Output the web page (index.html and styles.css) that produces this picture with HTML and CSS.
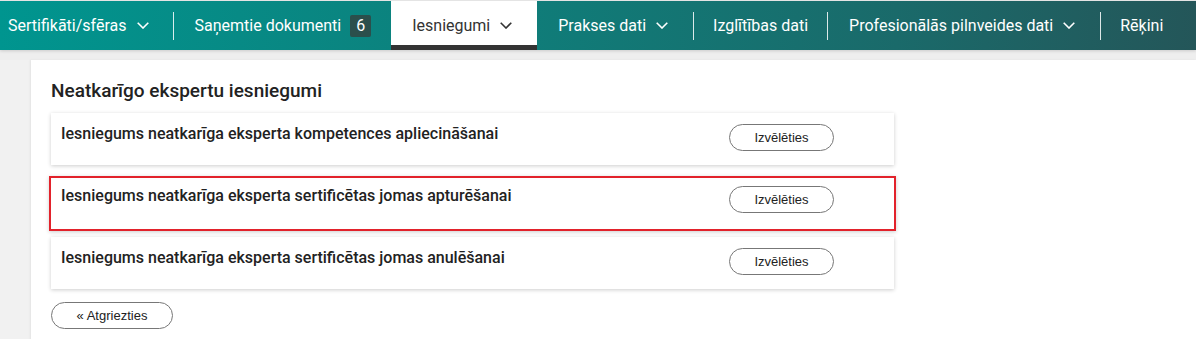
FILE: index.html
```html
<!DOCTYPE html>
<html lang="lv">
<head>
<meta charset="utf-8">
<title>Neatkarīgo ekspertu iesniegumi</title>
<link rel="stylesheet" href="styles.css">
</head>
<body>
<nav class="topnav">
  <a class="nav-item first">Sertifikāti/sfēras <svg class="chev" viewBox="0 0 12 7"><path d="M0.7 0.7 L6 6 L11.3 0.7"/></svg></a>
  <span class="sep"></span>
  <a class="nav-item docs">Saņemtie dokumenti <span class="badge">6</span></a>
  <a class="nav-item active">Iesniegumi <svg class="chev" viewBox="0 0 12 7"><path d="M0.7 0.7 L6 6 L11.3 0.7"/></svg></a>
  <a class="nav-item">Prakses dati <svg class="chev" viewBox="0 0 12 7"><path d="M0.7 0.7 L6 6 L11.3 0.7"/></svg></a>
  <span class="sep"></span>
  <a class="nav-item plain">Izglītības dati</a>
  <span class="sep"></span>
  <a class="nav-item">Profesionālās pilnveides dati <svg class="chev" viewBox="0 0 12 7"><path d="M0.7 0.7 L6 6 L11.3 0.7"/></svg></a>
  <span class="sep"></span>
  <a class="nav-item plain">Rēķini</a>
</nav>
<div class="band"></div>
<main class="panel">
  <h1 class="title">Neatkarīgo ekspertu iesniegumi</h1>
  <div class="list">
    <div class="row r1">
      <div class="row-title">Iesniegums neatkarīga eksperta kompetences apliecināšanai</div>
      <button class="btn pick">Izvēlēties</button>
    </div>
    <div class="row r2 selected">
      <div class="row-title">Iesniegums neatkarīga eksperta sertificētas jomas apturēšanai</div>
      <button class="btn pick">Izvēlēties</button>
    </div>
    <div class="row r3">
      <div class="row-title">Iesniegums neatkarīga eksperta sertificētas jomas anulēšanai</div>
      <button class="btn pick">Izvēlēties</button>
    </div>
  </div>
  <button class="btn back">« Atgriezties</button>
</main>
</body>
</html>
```
FILE: styles.css
```css
html, body {
  margin: 0;
  padding: 0;
}
body {
  background: #f1f1f1;
  font-family: Roboto, "Liberation Sans", Arial, sans-serif;
  color: #222;
  height: 339px;
  overflow: hidden;
}
.topnav {
  display: flex;
  align-items: center;
  height: 49px;
  border-top: 1px solid #e4e4e4;
  background: linear-gradient(90deg, #00958f 0%, #0e7f7b 40%, #1a6a6a 75%, #245659 100%);
  position: relative;
  z-index: 2;
  box-shadow: 0 1px 3px rgba(0,0,0,0.15);
}
.nav-item {
  display: flex;
  align-items: center;
  height: 49px;
  box-sizing: border-box;
  padding: 0 21px;
  color: #fff;
  font-size: 16px;
  white-space: nowrap;
}
.nav-item.first {
  padding-left: 8px;
  padding-right: 20px;
}
.nav-item.docs {
  padding-right: 20px;
}
.nav-item.plain {
  padding: 0 19px;
}
.nav-item .chev {
  width: 12px;
  height: 7px;
  margin-left: 10px;
  margin-right: 4px;
  fill: none;
  stroke: currentColor;
  stroke-width: 1.6;
}
.nav-item.active {
  background: #fff;
  color: #333;
  border-bottom: 5px solid #333;
  padding-top: 5px;
}
.sep {
  width: 1px;
  height: 28px;
  background: rgba(255,255,255,0.85);
}
.badge {
  display: inline-flex;
  align-items: center;
  justify-content: center;
  width: 21px;
  height: 22px;
  margin-left: 9px;
  background: #2b4f4c;
  border-radius: 2px;
  font-size: 16px;
  color: #fff;
}
.band {
  height: 10px;
  background: #eeeeee;
}
.panel {
  margin-left: 31px;
  background: #fff;
  padding: 20px 20px 40px 20px;
  min-height: 300px;
  box-shadow: -1px 0 2px rgba(0,0,0,0.06);
}
.title {
  margin: 0 0 11px 0;
  font-size: 19px;
  font-weight: 500;
  line-height: 22px;
  color: #222;
}
.list {
  width: 843px;
}
.row {
  display: flex;
  align-items: flex-start;
  box-sizing: border-box;
  height: 52px;
  padding: 11px 60px 0 10px;
  background: #fff;
  box-shadow: 0 1px 4px rgba(0,0,0,0.2);
}
.r1 { margin-bottom: 11px; }
.r2 { margin-bottom: 6px; }
.row.selected {
  height: 55px;
  margin-left: -2px;
  margin-right: -2px;
  width: 847px;
  border: 2px solid #e2222b;
  padding: 8px 60px 0 10px;
  box-shadow: 0 1px 4px rgba(0,0,0,0.2);
}
.row-title {
  flex: 1;
  font-size: 16px;
  font-weight: 500;
  line-height: 18px;
  padding-top: 1px;
  color: #222;
}
.btn {
  font-family: "Liberation Sans", Arial, sans-serif;
  font-size: 13px;
  color: #222;
  background: #fff;
  border: 1px solid #777;
  border-radius: 14px;
  height: 27px;
  padding: 0;
  cursor: pointer;
}
.pick {
  width: 105px;
}
.back {
  width: 122px;
  margin-top: 13px;
}
```
